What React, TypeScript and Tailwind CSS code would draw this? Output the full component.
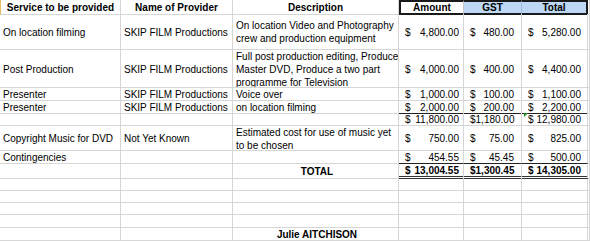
import React from "react";

const grid = "grid grid-cols-[121px_112px_166px_65px_58px_66px_1fr]";
const line = "border-[#d6d6d6]";

type Money = { a: string; g: string; t: string };

function Cell({
  children,
  className = "",
}: {
  children?: React.ReactNode;
  className?: string;
}) {
  return (
    <div className={`flex items-center border-r border-b ${line} overflow-hidden whitespace-nowrap leading-[11px] pt-px ${className}`}>
      {children}
    </div>
  );
}

function Dollar({ v, pr, bold, edge = "" }: { v: string; pr: string; bold?: boolean; edge?: string }) {
  return (
    <Cell className={`justify-between pl-[6px] ${pr} ${bold ? "font-bold" : ""} ${edge}`}>
      <span>$</span>
      <span>{v}</span>
    </Cell>
  );
}

function Row({
  h,
  a,
  b,
  c,
  m,
  bold,
  edge = "",
  tri,
}: {
  h: string;
  a?: string;
  b?: string;
  c?: React.ReactNode;
  m?: Money;
  bold?: boolean;
  edge?: string;
  tri?: boolean;
}) {
  return (
    <div className={`${grid} ${h}`}>
      <Cell className="pl-[3px]">{a}</Cell>
      <Cell className="pl-[3px]">{b}</Cell>
      <Cell className="pl-[3px] whitespace-normal">{c}</Cell>
      {m ? (
        <>
          <Dollar v={m.a} pr="pr-[4px]" bold={bold} edge={edge} />
          <Dollar v={m.g} pr="pr-[7px]" bold={bold} edge={edge} />
          <div className="relative flex">
            <Dollar v={m.t} pr="pr-[6px]" bold={bold} edge={`flex-1 ${edge}`} />
            {tri && (
              <span className="absolute left-[2px] top-0 h-0 w-0 border-t-[4px] border-r-[4px] border-t-[#1a8a1a] border-r-transparent" />
            )}
          </div>
        </>
      ) : (
        <>
          <Cell className={edge} />
          <Cell className={edge} />
          <Cell className={edge} />
        </>
      )}
      <Cell />
    </div>
  );
}

function Wrap({ children }: { children: React.ReactNode }) {
  return <span className="leading-[13px]">{children}</span>;
}

export default function App() {
  return (
    <div className="w-[590px] h-[242px] overflow-hidden bg-white text-[10px] text-black font-['Liberation_Sans',Arial,sans-serif]">
      <div className={`${grid} h-[14px] font-bold`}>
        <Cell className="justify-center border-l border-l-[#e8c060]">Service to be provided</Cell>
        <Cell className="justify-center">Name of Provider</Cell>
        <Cell className="justify-center">Description</Cell>
        <div className="flex items-center justify-center border-2 border-r border-[#1a1a1a] border-r-[#c8c8c8] leading-[10px] pt-px">Amount</div>
        <div className="flex items-center justify-center border-y-2 border-r border-[#1a1a1a] border-r-[#9fc0e0] bg-[#bcd8f4] leading-[10px] pt-px">GST</div>
        <div className="flex items-center justify-center border-y-2 border-r-2 border-[#1a1a1a] bg-[#bcd8f4] leading-[10px] pt-px">Total</div>
        <Cell />
      </div>
      <Row
        h="h-[36px]"
        a="On location filming"
        b="SKIP FILM Productions"
        c={<Wrap>On location Video and Photography<br />crew and production equipment</Wrap>}
        m={{ a: "4,800.00", g: "480.00", t: "5,280.00" }}
      />
      <Row
        h="h-[38px]"
        a="Post Production"
        b="SKIP FILM Productions"
        c={<Wrap>Full post production editing, Produce<br />Master DVD, Produce a two part<br />programme for Television</Wrap>}
        m={{ a: "4,000.00", g: "400.00", t: "4,400.00" }}
      />
      <Row h="h-[13px]" a="Presenter" b="SKIP FILM Productions" c="Voice over" m={{ a: "1,000.00", g: "100.00", t: "1,100.00" }} />
      <Row
        h="h-[12px]"
        a="Presenter"
        b="SKIP FILM Productions"
        c="on location filming"
        m={{ a: "2,000.00", g: "200.00", t: "2,200.00" }}
        edge="border-b-[#222]"
      />
      <Row h="h-[13px]" m={{ a: "11,800.00", g: "1,180.00", t: "12,980.00" }} tri />
      <Row
        h="h-[25px]"
        a="Copyright Music for DVD"
        b="Not Yet Known"
        c={<Wrap>Estimated cost for use of music yet<br />to be chosen</Wrap>}
        m={{ a: "750.00", g: "75.00", t: "825.00" }}
      />
      <Row h="h-[13px]" a="Contingencies" m={{ a: "454.55", g: "45.45", t: "500.00" }} edge="border-b-[#222]" />
      <Row
        h="h-[14px]"
        c={<span className="w-full text-center font-bold">TOTAL</span>}
        m={{ a: "13,004.55", g: "1,300.45", t: "14,305.00" }}
        bold
        edge="border-b-[3px] border-b-[#333] border-double"
      />
      <Row h="h-[13px]" />
      <Row h="h-[12px]" />
      <Row h="h-[12px]" />
      <Row h="h-[13px]" />
      <Row h="h-[13px]" c={<span className="w-full text-center font-bold">Julie AITCHISON</span>} />
    </div>
  );
}
